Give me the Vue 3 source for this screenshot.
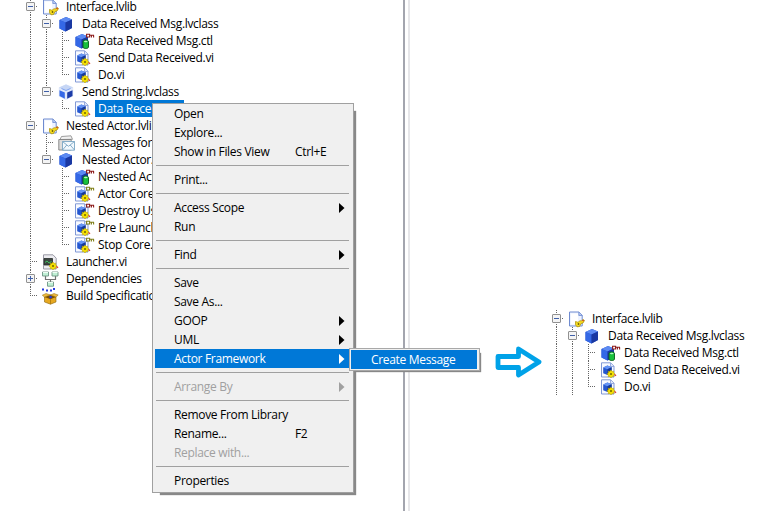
<script setup>
import { h } from 'vue'

// g: ancestor columns (1 draws a vertical guide); end: last sibling
const leftTree = [
  { t: 'Interface.lvlib', icon: 'lib', g: [], box: '-' },
  { t: 'Data Received Msg.lvclass', icon: 'cls', g: [1], box: '-' },
  { t: 'Data Received Msg.ctl', icon: 'ctl', g: [1, 1] },
  { t: 'Send Data Received.vi', icon: 'vi', g: [1, 1] },
  { t: 'Do.vi', icon: 'vi', g: [1, 1], end: true },
  { t: 'Send String.lvclass', icon: 'iface', g: [1], box: '-', end: true },
  { t: 'Data Received.vi', icon: 'vi', g: [1, 0], end: true, sel: true },
  { t: 'Nested Actor.lvlib', icon: 'lib', g: [], box: '-' },
  { t: 'Messages for this Actor', icon: 'folder', g: [1] },
  { t: 'Nested Actor.lvclass', icon: 'cls', g: [1], box: '-', end: true },
  { t: 'Nested Actor.ctl', icon: 'ctl', g: [1, 0] },
  { t: 'Actor Core.vi', icon: 'viy', g: [1, 0] },
  { t: 'Destroy User Events.vi', icon: 'vir', g: [1, 0] },
  { t: 'Pre Launch Init.vi', icon: 'viy', g: [1, 0] },
  { t: 'Stop Core.vi', icon: 'viy', g: [1, 0], end: true },
  { t: 'Launcher.vi', icon: 'launch', g: [] },
  { t: 'Dependencies', icon: 'deps', g: [], box: '+' },
  { t: 'Build Specifications', icon: 'build', g: [], end: true },
]
const rightTree = [
  { t: 'Interface.lvlib', icon: 'lib', g: [], box: '-' },
  { t: 'Data Received Msg.lvclass', icon: 'cls', g: [1], box: '-' },
  { t: 'Data Received Msg.ctl', icon: 'ctl', g: [1, 1] },
  { t: 'Send Data Received.vi', icon: 'vi', g: [1, 1] },
  { t: 'Do.vi', icon: 'vi', g: [1, 1], end: true },
]
const menu = [
  { t: 'Open' }, { t: 'Explore...' }, { t: 'Show in Files View', k: 'Ctrl+E' }, { sep: true },
  { t: 'Print...' }, { sep: true },
  { t: 'Access Scope', sub: true }, { t: 'Run' }, { sep: true },
  { t: 'Find', sub: true }, { sep: true },
  { t: 'Save' }, { t: 'Save As...' }, { t: 'GOOP', sub: true }, { t: 'UML', sub: true },
  { t: 'Actor Framework', sub: true, on: true }, { sep: true },
  { t: 'Arrange By', sub: true, off: true }, { sep: true },
  { t: 'Remove From Library' }, { t: 'Rename...', k: 'F2' }, { t: 'Replace with...', off: true }, { sep: true },
  { t: 'Properties' },
]

const p = (d, fill, stroke, w = 1) => h('path', { d, fill: fill || 'none', stroke: stroke || 'none', 'stroke-width': w })
const cube = [
  p('M1.5 4 8 1l6 2.5v8.500L7.500 15.500l-6-3z', '#2a55cc'),
  p('M1.5 4 8 1l6 2.5L7.5 6.5z', '#5c8af2'),
  p('M1.5 4l6 2.500v9l-6-3z', '#3468e6'),
  p('M7.500 6.500l6.500-3v8.500l-6.500 3.500z', '#1a38a2'),
]
const openCube = [
  p('M.8 3.500 8 .3l7.200 3v9L8 16 .8 12.500z', '#dfe8fa'),
  p('M1 3.500 8 .5l7 3-7 3z', '#c6d6f5'),
  p('M1.500 6.200l5.300 2.300v6.300l-5.300-2.700z', '#3468e6'),
  p('M9.200 8.500l5.300-2.300v5.900l-5.300 2.700z', '#1c3ca8'),
  p('M3.500 4.500 8 6.500l4.500-2', null, '#7fa3f0', 1),
]
const key = (c) => p('M12.600 1.200h3v2.800h-3zM15.600 2.300H20M17.400 2.300v2.200M19.600 2.300v2.200', '#fff', c, 1.1)
const page = [p('M1.500.8h9.200l3.300 3.400V15H1.500z', '#f8faff', '#8199d6'), p('M10.500 1v3.500H14', '#dbe4fa', '#8199d6', .8)]
const gear = [
  p('M11 8l1.100 1.500 1.700-.3-.2 1.700 1.500 1.100-1.500 1.100.2 1.700-1.700-.3L11 16l-1.100-1.500-1.700.3.200-1.700L6.900 12l1.500-1.100-.2-1.700 1.700.3z', '#f4e000', '#b39a00', .5),
  p('M10 12h2M11 11v2', null, '#5a5000', .8),
  p('M14.500 12.500l1.500 1.300', null, '#dc3c28', 1.300),
]
const viBody = [...page, p('M3.200 5.500 7.400 3.600l4.200 1.700v5.400l-4.200 2.200-4.200-1.700z', '#2457d0'), p('M3.200 5.500l4.200-1.900 4.200 1.700-4.200 1.900z', '#6594f4'), p('M7.400 7.200l4.200-1.900v5.400l-4.200 2.200z', '#173894')]
const art = {
  lib: [p('M1.500 1h9.500l3.200 3.200V15H1.500z', '#eef3ff', '#6f8bd0'), p('M3 2.500h7v11H3z', '#fff'), p('M10.800 1v3.500h3.400', '#b8caf2', '#6f8bd0', .8), p('M7.500 10.500l2.500.8 2-1.600 1.500.3 1.500-1.500 1.500 1-1.500 2.500-2 .5-1.500 3-2.500.3-1.500-2z', '#f6dc20', '#a88c00', .7), p('M9.500 13h2M10.500 12v2', null, '#5a5000', .7), p('M14.300 9l1.500 1', null, '#d0481c', 1.100)],
  cls: cube,
  iface: openCube,
  ctl: [...cube, key('#8c1a1a'), p('M9 8.500c0-2 5.500-2 5.500 0V14c0 2-5.500 2-5.500 0z', '#18c03c', '#0b5a1c', .9), p('M9.800 8.500c.5-1 3.500-1 3.900 0-.4.900-3.500.9-3.900 0z', '#b8f5c0')],
  vi: [...viBody, ...gear],
  viy: [...viBody, ...gear, key('#80801a')],
  vir: [...viBody, ...gear, key('#8c1a1a')],
  folder: [p('M2 4.500 3.500 1.500 13 .8l1.500 3.500z', '#f2f2f2', '#888', .8), p('M.8 4.500h12.400V15H.8z', '#dcdcdc', '#808080', .9), p('M4.500 6.500h12v8.700h-12z', '#f2f8fd', '#7ba6c4', .9), p('M4.500 6.500l6 4.800 6-4.800M4.500 15l4.300-5M16.500 15l-4.300-5', null, '#7ba6c4', .9)],
  launch: [p('M1.500.8h9.500l3.200 3.400V15H1.500z', '#ececf0', '#9a9aa6'), p('M2 4.500h8.500v6.500H2z', '#3c4640', '#262c28', .8), p('M3 8.500l2-1.500 2 2 2.500-1.500', null, '#3fc060', 1), ...gear],
  deps: [p('M3.500 5v3.500h10V5M8.500 8.500V11', null, '#707070', 1.200), p('M.5 1h6v4h-6zM10 1h6v4h-6zM5.500 11h6v4.200h-6z', '#bff0d4', '#6d9484', .9), p('M1 1.500h5M10.500 1.500h5M6 11.500h5', null, '#eefcf4', 1)],
  build: [p('M2.500 9 8.500 7l5.500 2v5l-5.500 2.200L2.500 14z', '#e6a820', '#8a6410', .6), p('M2.500 9l6-2 5.500 2-5.500 2.200z', '#7a5208'), p('M2.500 9 .3 7.200 4 5.500l4.500 1.500zM14 9l2.200-2L12 5.500 8.500 7z', '#f0bc3c', '#8a6410', .5), p('M8.500 11.200v5', null, '#b07c10', .9), p('M0 .5h2v2H0zM4 1.500h2v2H4zM8 1.500h2v2H8zM11 0h2v2h-2zM7.500 8h2.200v2.200H7.500z', '#2438e0')],
}
const Glyph = (props) => h('svg', { class: 'glyph', viewBox: '0 0 16 16', width: 16, height: 16 }, art[props.name])
Glyph.props = ['name']
</script>

<template>
  <main class="stage">
    <section class="project">
      <div v-for="(r, i) in leftTree" :key="i" class="row">
        <i v-for="(g, j) in r.g" :key="j" class="guide" :class="{ line: g }"></i>
        <i class="guide node" :class="{ end: r.end, line: !r.end }"><b v-if="r.box" class="box" :class="{ plus: r.box === '+' }"></b></i>
        <Glyph :name="r.icon" />
        <span class="label" :class="{ sel: r.sel }">{{ r.t }}</span>
      </div>
    </section>
    <div class="divider"></div>
    <section class="result">
      <svg class="arrow" viewBox="0 0 48 34" width="48" height="34"><path d="M3 11.500h20.500V4L44 17 23.500 30v-7.500H3z" fill="none" stroke="#00a2e8" stroke-width="4.800" stroke-linejoin="round" /></svg>
      <div class="mini">
        <div v-for="(r, i) in rightTree" :key="i" class="row">
          <i v-for="(g, j) in r.g" :key="j" class="guide" :class="{ line: g }"></i>
          <i class="guide node" :class="{ end: r.end, line: !r.end }"><b v-if="r.box" class="box"></b></i>
          <Glyph :name="r.icon" />
          <span class="label">{{ r.t }}</span>
        </div>
      </div>
    </section>

    <nav class="menu">
      <template v-for="(m, i) in menu" :key="i">
        <hr v-if="m.sep" />
        <div v-else class="item" :class="{ on: m.on, off: m.off }">
          <span class="name">{{ m.t }}</span><span class="keys">{{ m.k }}</span>
          <svg v-if="m.sub" class="tri" viewBox="0 0 6 10" width="6" height="10"><path d="M0 0 5.500 5 0 10z" fill="currentColor" /></svg>
        </div>
      </template>
    </nav>
    <nav class="submenu"><div class="subitem">Create Message</div></nav>
  </main>
</template>

<style>
body { margin: 0; background: #fff; }
</style>
<style scoped>
.stage { position: relative; width: 766px; height: 511px; overflow: hidden; display: flex; background: #fff; color: #000; font: 12px/17px "Open Sans", "Noto Sans", sans-serif; letter-spacing: -0.32px; }
.project { width: 381px; flex: none; padding-left: 22px; margin-top: -2px; }
.row { display: flex; height: 17px; align-items: center; white-space: nowrap; }
.guide { position: relative; width: 16px; height: 17px; flex: none; }
.guide.line::before, .guide.end::before { content: ""; position: absolute; left: 8px; top: 0; width: 1px; height: 17px; background: repeating-linear-gradient(#666 0 1px, transparent 1px 2px); }
.guide.end::before { height: 9px; }
.node::after { content: ""; position: absolute; left: 8px; top: 8px; width: 8px; height: 1px; background: repeating-linear-gradient(90deg, #666 0 1px, transparent 1px 2px); }
.box { position: absolute; z-index: 1; left: 4px; top: 4px; width: 7px; height: 7px; border: 1px solid #919191; border-radius: 1px; background: linear-gradient(#3f5fa8, #3f5fa8) center / 5px 1px no-repeat, #f4f4f4; }
.box.plus { background: linear-gradient(#3f5fa8, #3f5fa8) center / 5px 1px no-repeat, linear-gradient(#3f5fa8, #3f5fa8) center / 1px 5px no-repeat, #f4f4f4; }
.glyph { margin-left: 4px; overflow: visible; flex: none; }
.label { margin-left: 5px; padding: 0 3px; line-height: 13px; }
.label.sel { background: #0078d7; color: #fff; line-height: 17px; padding-right: 0; }
.divider { width: 3px; flex: none; border-left: 2px solid #a3a5ae; border-right: 2px solid #e6e6e9; }
.result { display: flex; align-items: flex-start; padding-left: 85px; padding-top: 310px; }
.arrow { margin-top: 35px; margin-right: 5px; }
.mini { height: 85px; overflow: hidden; }
.menu { position: absolute; left: 152px; top: 103px; box-sizing: border-box; width: 202px; height: 390px; border: 1px solid #a0a0a0; background: #f0f0f0; padding: 0 2px 0 1px; box-shadow: 5px 5px 1px -3px #888; }
.item { display: flex; align-items: center; height: 19px; padding: 0 6px 0 20px; }
.name { width: 121px; }
.keys { flex: 1; }
.item.on { background: #0078d7; color: #fff; margin-left: 1px; padding-left: 19px; }
.item.off { color: #a0a0a0; }
hr { height: 1px; margin: 4px 2px; border: 0; background: #a0a0a0; }
.submenu { position: absolute; left: 349px; top: 348px; box-sizing: border-box; width: 131px; height: 23px; border: 1px solid #a8a8a8; background: #f0f0f0; padding: 1px 2px 1px 1px; box-shadow: 3px 3px 1px -2px #888; }
.subitem { height: 19px; line-height: 19px; padding-left: 20px; background: #0078d7; color: #fff; }
</style>
